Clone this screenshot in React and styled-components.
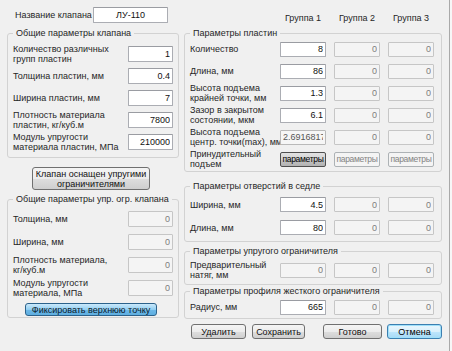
import React from "react";
import styled, { createGlobalStyle } from "styled-components";

const GlobalStyle = createGlobalStyle`
  html, body {
    margin: 0;
    padding: 0;
    background: #f7f7f7;
  }
  body {
    font-family: "Liberation Sans", Arial, sans-serif;
    font-size: 9px;
    color: #262626;
  }
  * {
    box-sizing: border-box;
  }
`;

const Window = styled.div`
  width: 450px;
  height: 351px;
  background: #f0f0f0;
  border-right: 1px solid #a9a9a9;
  display: grid;
  grid-template-columns: 172px 258px;
  column-gap: 5px;
  padding-left: 7px;
  overflow: hidden;
`;

const Column = styled.div`
  display: flex;
  flex-direction: column;
`;

const NameRow = styled.div`
  margin-top: 7px;
  height: 16px;
  padding-left: 8px;
  display: flex;
  align-items: center;
`;

const NameLabel = styled.span`
  width: 78px;
`;

const Group = styled.div`
  position: relative;
  margin-top: ${(p) => p.$mt}px;
  height: ${(p) => p.$h}px;
  padding: ${(p) => p.$pt}px 0 0 5px;
  border: 1px solid #d2d2d2;
  border-radius: 3px;
  display: flex;
  flex-direction: column;
`;

const Legend = styled.span`
  position: absolute;
  top: -6px;
  left: 5px;
  padding: 0 3px;
  line-height: 11px;
  background: #f0f0f0;
  white-space: nowrap;
`;

const Fields = styled.div`
  display: grid;
  grid-template-columns: ${(p) => p.$cols};
  grid-auto-rows: ${(p) => p.$row}px;
  column-gap: ${(p) => p.$gap || 0}px;
  align-items: center;
`;

const Label = styled.span`
  line-height: 10px;
  white-space: nowrap;
`;

const TextBox = styled.input`
  width: 100%;
  height: ${(p) => p.$h || 15}px;
  margin: 0;
  padding: 0 2px;
  border: 1px solid #abadb3;
  border-top-color: #9a9ca2;
  border-radius: 1px;
  background: #fff;
  font: inherit;
  font-size: 9px;
  color: #111;
  text-align: ${(p) => p.$align || "right"};
  outline: none;

  &:disabled {
    background: #f4f4f4;
    border-color: #c6c6c6;
    color: #7d7d7d;
  }

  &:read-only:not(:disabled) {
    background: #f6f6f6;
    border-color: #b9b9b9;
    color: #555;
  }
`;

const looks = {
  normal: `
    background: linear-gradient(#f4f4f4, #ececec 50%, #dedede 51%, #cfcfcf);
    border: 1px solid #707070;
    color: #111;
  `,
  pressed: `
    background: linear-gradient(#e2e2e2, #d2d2d2 50%, #c3c3c3 51%, #b3b3b3);
    border: 1px solid #4f4f4f;
    color: #000;
  `,
  off: `
    background: #f4f4f4;
    border: 1px solid #adb2b5;
    color: #838383;
  `,
  blue: `
    background: linear-gradient(#cbe9fb, #92cff2 50%, #6db8e8 51%, #5eaee0);
    border: 1px solid #2c628b;
    color: #0b1a2a;
  `,
  focus: `
    background: linear-gradient(#eaf6fd, #d9f0fc 50%, #bee6fd 51%, #a7d9f5);
    border: 1px solid #3c7fb1;
    box-shadow: inset 0 0 0 1px #9fe0fa;
    color: #000;
  `,
};

const Button = styled.button`
  width: ${(p) => p.$w}px;
  height: ${(p) => p.$h}px;
  margin: 0;
  padding: 0;
  border-radius: 3px;
  font: inherit;
  font-size: 9px;
  line-height: 10px;
  white-space: nowrap;
  ${(p) => looks[p.$look || "normal"]}
`;

const SmallButton = styled(Button)`
  font-size: 8.5px;
  letter-spacing: -0.3px;
  border-radius: 2px;
  overflow: hidden;
`;

const BigButton = styled(Button)`
  margin: 9px 0 0 25px;
  white-space: normal;
`;

const FixButton = styled(Button)`
  margin: 4px 0 0 12px;
`;

const Header = styled.div`
  margin-top: 12px;
  height: 12px;
  padding-left: 6px;
  display: grid;
  grid-template-columns: 82px 46px 46px 46px;
  column-gap: 8px;
  align-items: center;
  & > span {
    text-align: center;
  }
`;

const ButtonRow = styled.div`
  margin-top: 5px;
  padding-left: 7px;
  display: flex;
  justify-content: space-between;
`;

const ButtonPair = styled.div`
  display: flex;
  gap: ${(p) => p.$gap}px;
`;

const RIGHT_COLS = "82px 46px 46px 46px";

const plateRows = [
  { label: ["Количество"], values: ["8"] },
  { label: ["Длина, мм"], values: ["86"] },
  { label: ["Высота подъема", "крайней точки, мм"], values: ["1.3"] },
  { label: ["Зазор в закрытом", "состоянии, мкм"], values: ["6.1"] },
  { label: ["Высота подъема", "центр. точки(max), мм"], values: ["2.69168179"], readOnly: true },
];

const seatRows = [
  { label: ["Ширина, мм"], values: ["4.5"] },
  { label: ["Длина, мм"], values: ["80"] },
];

const leftRows = [
  { label: ["Количество различных", "групп пластин"], value: "1" },
  { label: ["Толщина пластин, мм"], value: "0.4" },
  { label: ["Ширина пластин, мм"], value: "7" },
  { label: ["Плотность материала", "пластин, кг/куб.м"], value: "7800" },
  { label: ["Модуль упругости", "материала пластин, МПа"], value: "210000" },
];

const springRows = [
  ["Толщина, мм"],
  ["Ширина, мм"],
  ["Плотность материала,", "кг/куб.м"],
  ["Модуль упругости", "материала, МПа"],
];

const LabelText = ({ lines }) => (
  <Label>
    {lines.map((l, i) => (
      <React.Fragment key={i}>
        {i > 0 && <br />}
        {l}
      </React.Fragment>
    ))}
  </Label>
);

const GroupRow = ({ row }) => (
  <>
    <LabelText lines={row.label} />
    {row.values ? (
      <TextBox
        defaultValue={row.values[0]}
        readOnly={row.readOnly}
        $align={row.readOnly ? "left" : "right"}
      />
    ) : (
      <TextBox defaultValue="0" disabled />
    )}
    <TextBox defaultValue="0" disabled />
    <TextBox defaultValue="0" disabled />
  </>
);

export default function App() {
  return (
    <>
      <GlobalStyle />
      <Window>
        <Column>
          <NameRow>
            <NameLabel>Название клапана</NameLabel>
            <TextBox defaultValue="ЛУ-110" $align="center" $h={16} style={{ width: 75 }} />
          </NameRow>

          <Group $mt={10} $h={125} $pt={9}>
            <Legend>Общие параметры клапана</Legend>
            <Fields $cols="115px 45px" $row={22}>
              {leftRows.map((r, i) => (
                <React.Fragment key={i}>
                  <LabelText lines={r.label} />
                  <TextBox defaultValue={r.value} $h={16} />
                </React.Fragment>
              ))}
            </Fields>
          </Group>

          <BigButton $w={118} $h={23}>
            Клапан оснащен упругими ограничителями
          </BigButton>

          <Group $mt={9} $h={119} $pt={7}>
            <Legend>Общие параметры упр. огр. клапана</Legend>
            <Fields $cols="115px 45px" $row={23}>
              {springRows.map((lines, i) => (
                <React.Fragment key={i}>
                  <LabelText lines={lines} />
                  <TextBox defaultValue="0" disabled $h={16} />
                </React.Fragment>
              ))}
            </Fields>
            <FixButton $look="blue" $w={132} $h={13}>
              Фиксировать верхнюю точку
            </FixButton>
          </Group>
        </Column>

        <Column>
          <Header>
            <span />
            <span>Группа 1</span>
            <span>Группа 2</span>
            <span>Группа 3</span>
          </Header>

          <Group $mt={9} $h={139} $pt={4}>
            <Legend>Параметры пластин</Legend>
            <Fields $cols={RIGHT_COLS} $row={22} $gap={8}>
              {plateRows.map((r, i) => (
                <GroupRow key={i} row={r} />
              ))}
              <LabelText lines={["Принудительный", "подъем"]} />
              <SmallButton $look="pressed" $w={46} $h={15}>параметры</SmallButton>
              <SmallButton $look="off" $w={46} $h={15}>параметры</SmallButton>
              <SmallButton $look="off" $w={46} $h={15}>параметры</SmallButton>
            </Fields>
          </Group>

          <Group $mt={14} $h={56} $pt={6}>
            <Legend>Параметры отверстий в седле</Legend>
            <Fields $cols={RIGHT_COLS} $row={23} $gap={8}>
              {seatRows.map((r, i) => (
                <GroupRow key={i} row={r} />
              ))}
            </Fields>
          </Group>

          <Group $mt={9} $h={34} $pt={7}>
            <Legend>Параметры упругого ограничителя</Legend>
            <Fields $cols={RIGHT_COLS} $row={22} $gap={8}>
              <GroupRow row={{ label: ["Предварительный", "натяг, мм"] }} />
            </Fields>
          </Group>

          <Group $mt={6} $h={28} $pt={4}>
            <Legend>Параметры профиля жесткого ограничителя</Legend>
            <Fields $cols={RIGHT_COLS} $row={22} $gap={8}>
              <GroupRow row={{ label: ["Радиус, мм"], values: ["665"] }} />
            </Fields>
          </Group>

          <ButtonRow>
            <ButtonPair $gap={6}>
              <Button $w={55} $h={15}>Удалить</Button>
              <Button $w={53} $h={15}>Сохранить</Button>
            </ButtonPair>
            <ButtonPair $gap={5}>
              <Button $w={59} $h={15}>Готово</Button>
              <Button $look="focus" $w={55} $h={15}>Отмена</Button>
            </ButtonPair>
          </ButtonRow>
        </Column>
      </Window>
    </>
  );
}
